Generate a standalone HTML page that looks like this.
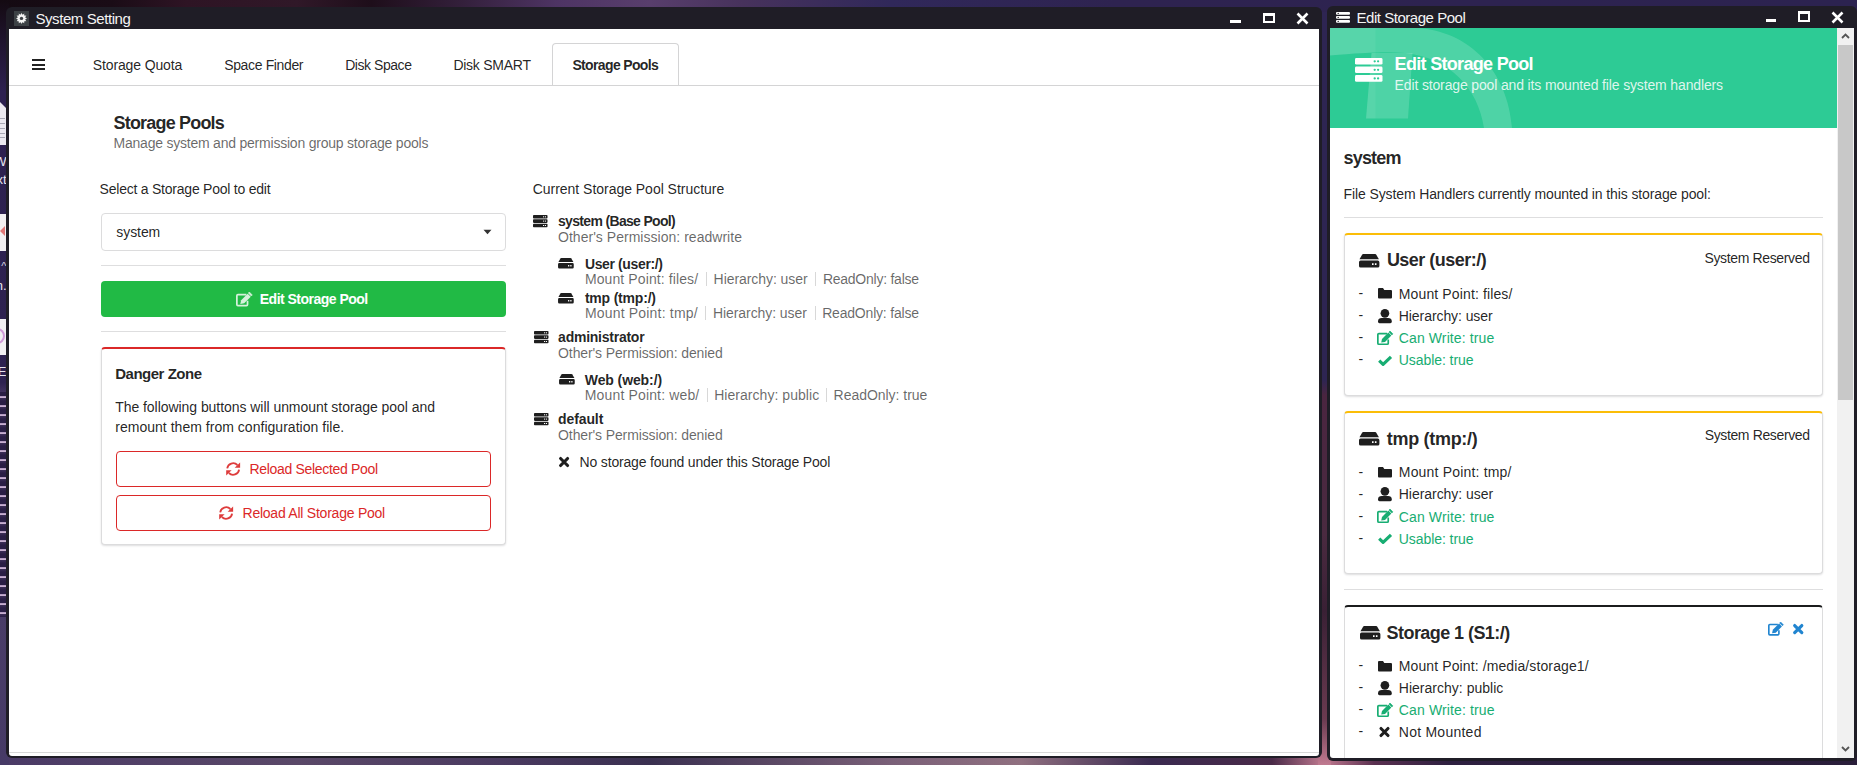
<!DOCTYPE html>
<html><head><meta charset="utf-8">
<style>
*{box-sizing:border-box}
html,body{margin:0;padding:0;width:1857px;height:765px;overflow:hidden;font-family:"Liberation Sans",sans-serif}
body{position:relative;background:#2a2040}
.a{position:absolute}
.t{position:absolute;white-space:pre}
.bg{left:0;top:0;width:1857px;height:765px;background:#2e2552}
.frame{background:#1f1d26;border-radius:6px}
.content{background:#fff}
.div{height:1px;background:#dededf}
.card{background:#fff;border:1px solid #dcdcdd;border-radius:4px;box-shadow:0 1px 2px 0 rgba(34,36,38,.15)}
svg{position:absolute;overflow:visible}
</style></head>
<body>
<div class="a bg"></div>
<div class="a" style="left:0;top:0;width:1857px;height:12px;background:linear-gradient(90deg,#140a12 0%,#1a0c16 6%,#2e1424 10%,#301828 16%,#1e0e1a 20%,#34203c 25%,#4e3464 30%,#583e6c 35%,#47325c 40%,#30285a 48%,#2e2350 60%,#2c2350 100%)"></div>
<div class="a" style="left:0;top:755px;width:1857px;height:10px;background:linear-gradient(90deg,#4a3a66 0%,#5a4868 16%,#4a3a60 27%,#3a3050 35%,#7a6078 48%,#907080 55%,#3a2a50 62%,#4a2a48 68.5%,#c07a90 71.3%,#5a3050 74%,#2e2040 78%,#2a1e3a 100%)"></div>
<div class="a" style="left:1318px;top:380px;width:13px;height:385px;background:linear-gradient(180deg,#2e2552 0%,#4a2540 4%,#4a2a40 40%,#3a2035 60%,#6a3a50 88%,#c07a90 100%)"></div>
<div class="a" style="left:0;top:0;width:9px;height:765px;background:linear-gradient(180deg,#140a12 0%,#2d2150 12%,#2e2250 50%,#5a4570 53%,#7a6080 62%,#6a5075 75%,#4a3d68 80%,#463a66 100%)"></div>
<div class="a" style="left:0;top:102px;width:6.5px;height:43px;background:#eceaf0"></div>
<div class="a" style="left:0;top:102px;width:0;height:0;border-top:6px solid #2d2150;border-left:6.5px solid transparent"></div>
<div class="a" style="left:0;top:118px;width:5px;height:1px;background:#a8a8b4"></div>
<div class="a" style="left:0;top:123px;width:5px;height:1px;background:#a8a8b4"></div>
<div class="a" style="left:0;top:128px;width:5px;height:1px;background:#a8a8b4"></div>
<div class="a" style="left:0;top:133px;width:5px;height:1px;background:#a8a8b4"></div>
<div class="a" style="left:0;top:137px;width:5px;height:1px;background:#a8a8b4"></div>
<div class="a" style="left:0;top:150px;width:6.5px;height:250px;overflow:hidden">
 <div class="t" style="right:0;top:5px;font-size:13px;line-height:13px;color:#e8e6ee">W</div>
 <div class="t" style="right:0;top:23px;font-size:13px;line-height:13px;color:#e8e6ee">xt</div>
 <div class="t" style="right:0;top:111px;font-size:11px;line-height:11px;color:#d8d6e0">^</div>
 <div class="t" style="right:0;top:129px;font-size:13px;line-height:13px;color:#e8e6ee">n.</div>
 <div class="t" style="right:0;top:215px;font-size:13px;line-height:13px;color:#e8e6ee">E</div>
 <div class="t" style="right:0;top:236px;font-size:13px;line-height:13px;color:#e8e6ee">..</div>
</div>
<div class="a" style="left:0;top:214px;width:6px;height:37px;background:#f2f0f2"></div>
<div class="a" style="left:0;top:226px;width:0;height:0;border-top:5px solid transparent;border-bottom:5px solid transparent;border-right:5px solid #e07878"></div>
<div class="a" style="left:0;top:319px;width:6px;height:36px;background:#f2f0f2"></div>
<div class="a" style="left:-4px;top:328px;width:9px;height:16px;border:2px solid #d09ad8;border-left:0;border-radius:0 8px 8px 0"></div>
<div class="a" style="left:0;top:392px;width:8px;height:225px;background:repeating-linear-gradient(180deg,#2a1e45 0px,#2a1e45 4px,#a890b8 4px,#c8b0d0 5.5px,#3a2c55 6.5px,#2a1e45 9px)"></div>
<!-- ===== Window 1 ===== -->
<div class="a frame" style="left:6px;top:7px;width:1316px;height:751px"></div>
<div class="a content" style="left:9px;top:29px;width:1310px;height:727px;border-radius:0 0 3px 3px"></div>
<div class="a" style="left:9px;top:752px;width:1310px;height:1px;background:#d8d8d8"></div>
<!-- gear icon box -->
<div class="a" style="left:14px;top:11px;width:15px;height:15px;background:#3c4145"></div>
<svg style="left:14px;top:11px" width="15" height="15" viewBox="0 0 15 15">
 <polygon points="7.50,1.80 8.43,3.92 10.30,2.55 10.05,4.85 12.35,4.60 10.98,6.47 13.10,7.40 10.98,8.33 12.35,10.20 10.05,9.95 10.30,12.25 8.43,10.88 7.50,13.00 6.57,10.88 4.70,12.25 4.95,9.95 2.65,10.20 4.02,8.33 1.90,7.40 4.02,6.47 2.65,4.60 4.95,4.85 4.70,2.55 6.57,3.92" fill="#f2f2f2"/>
 <circle cx="7.5" cy="7.4" r="3.9" fill="#f2f2f2"/>
 <circle cx="7.5" cy="7.4" r="1.7" fill="#3c4145"/>
</svg>
<!-- window controls win1 -->
<div class="a" style="left:1230px;top:20px;width:11px;height:3px;background:#fff"></div>
<div class="a" style="left:1263px;top:13px;width:12px;height:10px;border:2px solid #fff;border-top-width:3px"></div>
<svg style="left:1296px;top:12px" width="13" height="13" viewBox="0 0 13 13"><path d="M1.5 1.5L11.5 11.5M11.5 1.5L1.5 11.5" stroke="#fff" stroke-width="2.6"/></svg>

<!-- tabs -->
<div class="a" style="left:9px;top:85px;width:1310px;height:1px;background:#d4d4d5"></div>
<div class="a" style="left:552px;top:43px;width:127px;height:43px;border:1px solid #d4d4d5;border-bottom:0;border-radius:4px 4px 0 0;background:#fff"></div>
<div class="a" style="left:553px;top:85px;width:125px;height:1px;background:#d4d4d5"></div>
<div class="a" style="left:32px;top:59px;width:13px;height:2px;background:#222"></div>
<div class="a" style="left:32px;top:63.5px;width:13px;height:2px;background:#222"></div>
<div class="a" style="left:32px;top:68px;width:13px;height:2px;background:#222"></div>

<!-- dropdown -->
<div class="a" style="left:101px;top:213px;width:405px;height:38px;border:1px solid #dcdcdd;border-radius:4px"></div>
<svg style="left:483px;top:229px" width="9" height="6" viewBox="0 0 9 6"><path d="M0.5 0.8H8.5L4.5 5.2Z" fill="#333"/></svg>
<div class="a div" style="left:101px;top:265px;width:405px"></div>
<div class="a" style="left:101px;top:281px;width:405px;height:36px;background:#21ba45;border-radius:4px"></div>
<div class="a div" style="left:101px;top:331px;width:405px"></div>
<!-- danger zone -->
<div class="a card" style="left:101px;top:347px;width:405px;height:198px;border-top:2px solid #db2828"></div>
<div class="a" style="left:116px;top:451px;width:375px;height:36px;border:1px solid #db2828;border-radius:4px"></div>
<div class="a" style="left:116px;top:495px;width:375px;height:36px;border:1px solid #db2828;border-radius:4px"></div>

<!-- ===== Window 2 ===== -->
<div class="a frame" style="left:1327px;top:6px;width:530px;height:754.6px"></div>
<div class="a content" style="left:1330px;top:28px;width:524px;height:730px;border-radius:0 0 3px 3px;overflow:hidden">
</div>
<!-- green header -->
<div class="a" style="left:1330px;top:28px;width:507px;height:99.6px;background:#2dcb95;overflow:hidden">
 <svg style="left:0;top:0" width="507" height="100" viewBox="1330 28 507 100">
  <defs><clipPath id="cl"><rect x="1300" y="0" width="75.6" height="200"/></clipPath></defs>
  <path d="M1300 28H1415C1470 30 1508 72 1512 128H1484C1478 88 1450 58 1405 53C1380 51 1350 54 1300 58Z" fill="#fff" fill-opacity=".16"/>
  <path d="M1371.5 53H1412.5L1408 118.5H1366Z" fill="#fff" fill-opacity=".16"/>
  <g clip-path="url(#cl)" fill="#fff" fill-opacity=".05">
  <path d="M1300 28H1415C1470 30 1508 72 1512 128H1484C1478 88 1450 58 1405 53C1380 51 1350 54 1300 58Z"/>
  <path d="M1371.5 53H1412.5L1408 118.5H1366Z"/>
  </g>
 </svg>
</div>
<!-- scrollbar -->
<div class="a" style="left:1837px;top:28px;width:17px;height:730px;background:#f1f1f1"></div>
<div class="a" style="left:1838px;top:45px;width:15px;height:355px;background:#c8c8c8"></div>
<svg style="left:1841px;top:33px" width="9" height="6" viewBox="0 0 9 6"><path d="M1 5L4.5 1.5L8 5" stroke="#555" stroke-width="1.8" fill="none"/></svg>
<svg style="left:1841px;top:746px" width="9" height="6" viewBox="0 0 9 6"><path d="M1 1L4.5 4.5L8 1" stroke="#555" stroke-width="1.8" fill="none"/></svg>
<!-- win2 controls -->
<div class="a" style="left:1766px;top:19px;width:10px;height:3px;background:#fff"></div>
<div class="a" style="left:1798px;top:11px;width:12px;height:11px;border:2px solid #fff;border-top-width:3px"></div>
<svg style="left:1831px;top:10.5px" width="13" height="13" viewBox="0 0 13 13"><path d="M1.5 1.5L11.5 11.5M11.5 1.5L1.5 11.5" stroke="#fff" stroke-width="2.6"/></svg>
<!-- win2 title icon -->
<svg style="left:1336px;top:12px" width="14" height="11" viewBox="0 0 14 11">
 <rect x="0" y="0" width="14" height="2.8" rx="1" fill="#fff"/><rect x="0" y="4" width="14" height="2.8" rx="1" fill="#fff"/><rect x="0" y="8" width="14" height="2.8" rx="1" fill="#fff"/>
 <circle cx="2.2" cy="1.4" r=".7" fill="#1d1b21"/><circle cx="2.2" cy="5.4" r=".7" fill="#1d1b21"/><circle cx="2.2" cy="9.4" r=".7" fill="#1d1b21"/>
</svg>

<div class="a div" style="left:1344px;top:217px;width:479px"></div>
<div class="a card" style="left:1344px;top:233px;width:479px;height:163px;border-top:2px solid #fbbd08"></div>
<div class="a card" style="left:1344px;top:411px;width:479px;height:163px;border-top:2px solid #fbbd08"></div>
<div class="a div" style="left:1344px;top:589px;width:479px"></div>
<div class="a card" style="left:1344px;top:605px;width:479px;height:153px;border-top:2px solid #1b1c1d;border-bottom:0;border-radius:4px 4px 0 0;box-shadow:none"></div>
<!-- ICONS -->

<!-- tree server icons -->
<svg style="left:533px;top:214.7px" width="14.5" height="12.3" viewBox="0 0 14.5 12.3">
 <g fill="#1e1e1e"><rect x="0" y="0" width="14.5" height="3.6" rx=".8"/><rect x="0" y="4.3" width="14.5" height="3.6" rx=".8"/><rect x="0" y="8.7" width="14.5" height="3.6" rx=".8"/></g>
 <g fill="#fff"><rect x="10" y="1.3" width="1.1" height="1"/><rect x="11.9" y="1.3" width="1.1" height="1"/><rect x="10" y="5.6" width="1.1" height="1"/><rect x="11.9" y="5.6" width="1.1" height="1"/><rect x="10" y="10" width="1.1" height="1"/><rect x="11.9" y="10" width="1.1" height="1"/></g>
</svg>
<svg style="left:533.5px;top:330.7px" width="14.5" height="12.3" viewBox="0 0 14.5 12.3">
 <g fill="#1e1e1e"><rect x="0" y="0" width="14.5" height="3.6" rx=".8"/><rect x="0" y="4.3" width="14.5" height="3.6" rx=".8"/><rect x="0" y="8.7" width="14.5" height="3.6" rx=".8"/></g>
 <g fill="#fff"><rect x="10" y="1.3" width="1.1" height="1"/><rect x="11.9" y="1.3" width="1.1" height="1"/><rect x="10" y="5.6" width="1.1" height="1"/><rect x="11.9" y="5.6" width="1.1" height="1"/><rect x="10" y="10" width="1.1" height="1"/><rect x="11.9" y="10" width="1.1" height="1"/></g>
</svg>
<svg style="left:533.5px;top:412.6px" width="14.5" height="12.3" viewBox="0 0 14.5 12.3">
 <g fill="#1e1e1e"><rect x="0" y="0" width="14.5" height="3.6" rx=".8"/><rect x="0" y="4.3" width="14.5" height="3.6" rx=".8"/><rect x="0" y="8.7" width="14.5" height="3.6" rx=".8"/></g>
 <g fill="#fff"><rect x="10" y="1.3" width="1.1" height="1"/><rect x="11.9" y="1.3" width="1.1" height="1"/><rect x="10" y="5.6" width="1.1" height="1"/><rect x="11.9" y="5.6" width="1.1" height="1"/><rect x="10" y="10" width="1.1" height="1"/><rect x="11.9" y="10" width="1.1" height="1"/></g>
</svg>
<!-- header server icon -->
<svg style="left:1355.2px;top:58px" width="27.5" height="23.8" viewBox="0 0 27.5 23.8">
 <g fill="#fff"><rect x="0" y="0" width="27.5" height="6.6" rx="1.4"/><rect x="0" y="8.5" width="27.5" height="6.6" rx="1.4"/><rect x="0" y="17.1" width="27.5" height="6.7" rx="1.4"/></g>
 <g fill="#2dcb95"><circle cx="19.7" cy="3.3" r="1.15"/><circle cx="23.1" cy="3.3" r="1.15"/><circle cx="19.7" cy="11.8" r="1.15"/><circle cx="23.1" cy="11.8" r="1.15"/><circle cx="19.7" cy="20.4" r="1.15"/><circle cx="23.1" cy="20.4" r="1.15"/></g>
</svg>
<!-- tree hdd icons -->
<svg style="left:558.4px;top:258.4px;color:#1e1e1e;fill:#1e1e1e" width="15.8" height="10.4" viewBox="0 0 20.4 13.5"><path d="M4.2 0H16.2Q16.9 0 17.3 0.7L19.9 5.3H0.5L3.1 0.7Q3.5 0 4.2 0Z"/>
   <path d="M1.6 6.6H18.8Q20.4 6.6 20.4 8.2V11.9Q20.4 13.5 18.8 13.5H1.6Q0 13.5 0 11.9V8.2Q0 6.6 1.6 6.6ZM13 9.2V10.9H14.6V9.2ZM15.9 9.2V10.9H17.5V9.2Z" fill-rule="evenodd"/></svg>
<svg style="left:558.4px;top:293px;color:#1e1e1e;fill:#1e1e1e" width="15.8" height="10.4" viewBox="0 0 20.4 13.5"><path d="M4.2 0H16.2Q16.9 0 17.3 0.7L19.9 5.3H0.5L3.1 0.7Q3.5 0 4.2 0Z"/>
   <path d="M1.6 6.6H18.8Q20.4 6.6 20.4 8.2V11.9Q20.4 13.5 18.8 13.5H1.6Q0 13.5 0 11.9V8.2Q0 6.6 1.6 6.6ZM13 9.2V10.9H14.6V9.2ZM15.9 9.2V10.9H17.5V9.2Z" fill-rule="evenodd"/></svg>
<svg style="left:558.9px;top:373.8px;color:#1e1e1e;fill:#1e1e1e" width="15.8" height="10.4" viewBox="0 0 20.4 13.5"><path d="M4.2 0H16.2Q16.9 0 17.3 0.7L19.9 5.3H0.5L3.1 0.7Q3.5 0 4.2 0Z"/>
   <path d="M1.6 6.6H18.8Q20.4 6.6 20.4 8.2V11.9Q20.4 13.5 18.8 13.5H1.6Q0 13.5 0 11.9V8.2Q0 6.6 1.6 6.6ZM13 9.2V10.9H14.6V9.2ZM15.9 9.2V10.9H17.5V9.2Z" fill-rule="evenodd"/></svg>
<svg style="left:558.9px;top:456.9px;color:#1e1e1e;fill:#1e1e1e" width="10.2" height="10" viewBox="0 0 10 10"><path d="M1.5 1.5L8.5 8.5M8.5 1.5L1.5 8.5" fill="none" stroke="currentColor" stroke-width="3.1" stroke-linecap="round"/></svg>
<!-- tree separators -->
<div class="a" style="left:706px;top:272px;width:1px;height:14px;background:#d8d8d8"></div>
<div class="a" style="left:815px;top:272px;width:1px;height:14px;background:#d8d8d8"></div>
<div class="a" style="left:705px;top:306px;width:1px;height:14px;background:#d8d8d8"></div>
<div class="a" style="left:814.5px;top:306px;width:1px;height:14px;background:#d8d8d8"></div>
<div class="a" style="left:706.5px;top:388px;width:1px;height:14px;background:#d8d8d8"></div>
<div class="a" style="left:826px;top:388px;width:1px;height:14px;background:#d8d8d8"></div>
<!-- button icons -->
<svg style="left:235.6px;top:291.5px;color:#d6f1db;fill:#d6f1db" width="16.4" height="14.5" viewBox="0 0 16 14.1"><path d="M10.2 2.55H1.9Q0.85 2.55 0.85 3.6V12.2Q0.85 13.25 1.9 13.25H10.2Q11.25 13.25 11.25 12.2V8.5" fill="none" stroke="currentColor" stroke-width="1.7"/>
   <path d="M4.2 11.6L5 8L11.4 1.6L14.4 4.6L8 11Z"/>
   <path d="M12 1L13 0L15.9 2.9L14.9 3.9Z" stroke="currentColor" stroke-width=".6" stroke-linejoin="round"/></svg>
<svg style="left:226px;top:461.9px;color:#db2828;fill:#db2828;opacity:.9" width="14.3" height="14" viewBox="0 0 14.3 14"><path d="M1.2 6.4A6 6 0 0 1 11.4 3" fill="none" stroke="currentColor" stroke-width="1.8"/>
   <path d="M14.1 0.4V5.8H8.7Z"/>
   <path d="M13.1 7.6A6 6 0 0 1 2.9 11" fill="none" stroke="currentColor" stroke-width="1.8"/>
   <path d="M0.2 13.6V8.2H5.6Z"/></svg>
<svg style="left:219px;top:505.9px;color:#db2828;fill:#db2828;opacity:.9" width="14.3" height="14" viewBox="0 0 14.3 14"><path d="M1.2 6.4A6 6 0 0 1 11.4 3" fill="none" stroke="currentColor" stroke-width="1.8"/>
   <path d="M14.1 0.4V5.8H8.7Z"/>
   <path d="M13.1 7.6A6 6 0 0 1 2.9 11" fill="none" stroke="currentColor" stroke-width="1.8"/>
   <path d="M0.2 13.6V8.2H5.6Z"/></svg>
<!-- card hdd icons -->
<svg style="left:1359.4px;top:253.6px;fill:#1e1e1e" width="20.4" height="13.5" viewBox="0 0 20.4 13.5"><path d="M4.2 0H16.2Q16.9 0 17.3 0.7L19.9 5.3H0.5L3.1 0.7Q3.5 0 4.2 0Z"/>
   <path d="M1.6 6.6H18.8Q20.4 6.6 20.4 8.2V11.9Q20.4 13.5 18.8 13.5H1.6Q0 13.5 0 11.9V8.2Q0 6.6 1.6 6.6ZM13 9.2V10.9H14.6V9.2ZM15.9 9.2V10.9H17.5V9.2Z" fill-rule="evenodd"/></svg>
<svg style="left:1359px;top:431.7px;fill:#1e1e1e" width="20.4" height="13.5" viewBox="0 0 20.4 13.5"><path d="M4.2 0H16.2Q16.9 0 17.3 0.7L19.9 5.3H0.5L3.1 0.7Q3.5 0 4.2 0Z"/>
   <path d="M1.6 6.6H18.8Q20.4 6.6 20.4 8.2V11.9Q20.4 13.5 18.8 13.5H1.6Q0 13.5 0 11.9V8.2Q0 6.6 1.6 6.6ZM13 9.2V10.9H14.6V9.2ZM15.9 9.2V10.9H17.5V9.2Z" fill-rule="evenodd"/></svg>
<svg style="left:1359.6px;top:625.7px;fill:#1e1e1e" width="20.4" height="13.5" viewBox="0 0 20.4 13.5"><path d="M4.2 0H16.2Q16.9 0 17.3 0.7L19.9 5.3H0.5L3.1 0.7Q3.5 0 4.2 0Z"/>
   <path d="M1.6 6.6H18.8Q20.4 6.6 20.4 8.2V11.9Q20.4 13.5 18.8 13.5H1.6Q0 13.5 0 11.9V8.2Q0 6.6 1.6 6.6ZM13 9.2V10.9H14.6V9.2ZM15.9 9.2V10.9H17.5V9.2Z" fill-rule="evenodd"/></svg>
<!-- card 3 blue icons -->
<svg style="left:1767.7px;top:622.4px;color:#2185d0;fill:#2185d0" width="15.5" height="13.7" viewBox="0 0 16 14.1"><path d="M10.2 2.55H1.9Q0.85 2.55 0.85 3.6V12.2Q0.85 13.25 1.9 13.25H10.2Q11.25 13.25 11.25 12.2V8.5" fill="none" stroke="currentColor" stroke-width="1.7"/>
   <path d="M4.2 11.6L5 8L11.4 1.6L14.4 4.6L8 11Z"/>
   <path d="M12 1L13 0L15.9 2.9L14.9 3.9Z" stroke="currentColor" stroke-width=".6" stroke-linejoin="round"/></svg>
<svg style="left:1793px;top:623.7px;color:#2185d0;fill:#2185d0" width="10.5" height="10.2" viewBox="0 0 10 10"><path d="M1.5 1.5L8.5 8.5M8.5 1.5L1.5 8.5" fill="none" stroke="currentColor" stroke-width="3.1" stroke-linecap="round"/></svg>

<svg style="left:1377.9px;top:288.3px;fill:#1e1e1e" width="14" height="10.6" viewBox="0 0 14 10.6"><path d="M0 1Q0 0 1 0H5L6.3 2H13Q14 2 14 3V9.6Q14 10.6 13 10.6H1Q0 10.6 0 9.6Z"/></svg>
<svg style="left:1378px;top:308.8px;fill:#1e1e1e" width="13.8" height="14.3" viewBox="0 0 14 14.5"><circle cx="7" cy="4.4" r="4.4"/>
   <path d="M0 12.5C0 10.3 1.6 9.2 3.8 9.2H10.2C12.4 9.2 14 10.3 14 12.5V13Q14 14.5 12.5 14.5H1.5Q0 14.5 0 13Z"/></svg>
<svg style="left:1377px;top:330.7px;color:#17ad72;fill:#17ad72" width="16" height="14.1" viewBox="0 0 16 14.1"><path d="M10.2 2.55H1.9Q0.85 2.55 0.85 3.6V12.2Q0.85 13.25 1.9 13.25H10.2Q11.25 13.25 11.25 12.2V8.5" fill="none" stroke="currentColor" stroke-width="1.7"/>
   <path d="M4.2 11.6L5 8L11.4 1.6L14.4 4.6L8 11Z"/>
   <path d="M12 1L13 0L15.9 2.9L14.9 3.9Z" stroke="currentColor" stroke-width=".6" stroke-linejoin="round"/></svg>
<svg style="left:1378px;top:355.6px;color:#17ad72;fill:#17ad72" width="14.2" height="10.4" viewBox="0 0 14 10.4"><path d="M1.1 4.6L5 8.3L12.9 0.9" fill="none" stroke="currentColor" stroke-width="3.2" stroke-linejoin="round"/></svg>
<svg style="left:1377.9px;top:466.9px;fill:#1e1e1e" width="14" height="10.6" viewBox="0 0 14 10.6"><path d="M0 1Q0 0 1 0H5L6.3 2H13Q14 2 14 3V9.6Q14 10.6 13 10.6H1Q0 10.6 0 9.6Z"/></svg>
<svg style="left:1378px;top:487.4px;fill:#1e1e1e" width="13.8" height="14.3" viewBox="0 0 14 14.5"><circle cx="7" cy="4.4" r="4.4"/>
   <path d="M0 12.5C0 10.3 1.6 9.2 3.8 9.2H10.2C12.4 9.2 14 10.3 14 12.5V13Q14 14.5 12.5 14.5H1.5Q0 14.5 0 13Z"/></svg>
<svg style="left:1377px;top:509.3px;color:#17ad72;fill:#17ad72" width="16" height="14.1" viewBox="0 0 16 14.1"><path d="M10.2 2.55H1.9Q0.85 2.55 0.85 3.6V12.2Q0.85 13.25 1.9 13.25H10.2Q11.25 13.25 11.25 12.2V8.5" fill="none" stroke="currentColor" stroke-width="1.7"/>
   <path d="M4.2 11.6L5 8L11.4 1.6L14.4 4.6L8 11Z"/>
   <path d="M12 1L13 0L15.9 2.9L14.9 3.9Z" stroke="currentColor" stroke-width=".6" stroke-linejoin="round"/></svg>
<svg style="left:1378px;top:534.2px;color:#17ad72;fill:#17ad72" width="14.2" height="10.4" viewBox="0 0 14 10.4"><path d="M1.1 4.6L5 8.3L12.9 0.9" fill="none" stroke="currentColor" stroke-width="3.2" stroke-linejoin="round"/></svg>
<svg style="left:1377.9px;top:660.5px;fill:#1e1e1e" width="14" height="10.6" viewBox="0 0 14 10.6"><path d="M0 1Q0 0 1 0H5L6.3 2H13Q14 2 14 3V9.6Q14 10.6 13 10.6H1Q0 10.6 0 9.6Z"/></svg>
<svg style="left:1378px;top:681.0px;fill:#1e1e1e" width="13.8" height="14.3" viewBox="0 0 14 14.5"><circle cx="7" cy="4.4" r="4.4"/>
   <path d="M0 12.5C0 10.3 1.6 9.2 3.8 9.2H10.2C12.4 9.2 14 10.3 14 12.5V13Q14 14.5 12.5 14.5H1.5Q0 14.5 0 13Z"/></svg>
<svg style="left:1377px;top:702.9px;color:#17ad72;fill:#17ad72" width="16" height="14.1" viewBox="0 0 16 14.1"><path d="M10.2 2.55H1.9Q0.85 2.55 0.85 3.6V12.2Q0.85 13.25 1.9 13.25H10.2Q11.25 13.25 11.25 12.2V8.5" fill="none" stroke="currentColor" stroke-width="1.7"/>
   <path d="M4.2 11.6L5 8L11.4 1.6L14.4 4.6L8 11Z"/>
   <path d="M12 1L13 0L15.9 2.9L14.9 3.9Z" stroke="currentColor" stroke-width=".6" stroke-linejoin="round"/></svg>
<svg style="left:1379.3px;top:726.9px;color:#1e1e1e;fill:#1e1e1e" width="11" height="10" viewBox="0 0 10 10"><path d="M1.5 1.5L8.5 8.5M8.5 1.5L1.5 8.5" fill="none" stroke="currentColor" stroke-width="3.1" stroke-linecap="round"/></svg>

<div class="t" style="left:35.4px;top:11.4px;font-size:15px;line-height:15px;font-weight:400;color:#f4f4f4;letter-spacing:-0.414px">System Setting</div>
<div class="t" style="left:92.8px;top:57.6px;font-size:14px;line-height:14px;font-weight:400;color:rgba(0,0,0,.87);letter-spacing:-0.128px">Storage Quota</div>
<div class="t" style="left:224.2px;top:57.6px;font-size:14px;line-height:14px;font-weight:400;color:rgba(0,0,0,.87);letter-spacing:-0.357px">Space Finder</div>
<div class="t" style="left:345.2px;top:57.6px;font-size:14px;line-height:14px;font-weight:400;color:rgba(0,0,0,.87);letter-spacing:-0.451px">Disk Space</div>
<div class="t" style="left:453.4px;top:57.6px;font-size:14px;line-height:14px;font-weight:400;color:rgba(0,0,0,.87);letter-spacing:-0.256px">Disk SMART</div>
<div class="t" style="left:572.4px;top:57.6px;font-size:14px;line-height:14px;font-weight:700;color:rgba(0,0,0,.87);letter-spacing:-0.642px">Storage Pools</div>
<div class="t" style="left:113.5px;top:114.4px;font-size:18px;line-height:18px;font-weight:700;color:rgba(0,0,0,.87);letter-spacing:-0.810px">Storage Pools</div>
<div class="t" style="left:113.5px;top:136.3px;font-size:14px;line-height:14px;font-weight:400;color:rgba(0,0,0,.6);letter-spacing:-0.221px">Manage system and permission group storage pools</div>
<div class="t" style="left:99.6px;top:182.3px;font-size:14px;line-height:14px;font-weight:400;color:rgba(0,0,0,.87);letter-spacing:-0.229px">Select a Storage Pool to edit</div>
<div class="t" style="left:116.3px;top:225.1px;font-size:14px;line-height:14px;font-weight:400;color:rgba(0,0,0,.87);letter-spacing:-0.074px">system</div>
<div class="t" style="left:259.8px;top:292.2px;font-size:14px;line-height:14px;font-weight:700;color:#ffffff;letter-spacing:-0.517px">Edit Storage Pool</div>
<div class="t" style="left:115.2px;top:366.1px;font-size:15px;line-height:15px;font-weight:700;color:rgba(0,0,0,.87);letter-spacing:-0.481px">Danger Zone</div>
<div class="t" style="left:115.2px;top:400.3px;font-size:14px;line-height:14px;font-weight:400;color:rgba(0,0,0,.87);letter-spacing:-0.049px">The following buttons will unmount storage pool and</div>
<div class="t" style="left:115.2px;top:420.1px;font-size:14px;line-height:14px;font-weight:400;color:rgba(0,0,0,.87);letter-spacing:0.027px">remount them from configuration file.</div>
<div class="t" style="left:249.4px;top:462.4px;font-size:14px;line-height:14px;font-weight:400;color:#db2828;letter-spacing:-0.313px">Reload Selected Pool</div>
<div class="t" style="left:242.5px;top:506.4px;font-size:14px;line-height:14px;font-weight:400;color:#db2828;letter-spacing:-0.234px">Reload All Storage Pool</div>
<div class="t" style="left:532.7px;top:182.1px;font-size:14px;line-height:14px;font-weight:400;color:rgba(0,0,0,.87);letter-spacing:-0.024px">Current Storage Pool Structure</div>
<div class="t" style="left:558.0px;top:214.0px;font-size:14px;line-height:14px;font-weight:700;color:rgba(0,0,0,.87);letter-spacing:-0.671px">system (Base Pool)</div>
<div class="t" style="left:558.0px;top:229.7px;font-size:14px;line-height:14px;font-weight:400;color:rgba(0,0,0,.6);letter-spacing:0.028px">Other's Permission: readwrite</div>
<div class="t" style="left:584.9px;top:257.4px;font-size:14px;line-height:14px;font-weight:700;color:rgba(0,0,0,.87);letter-spacing:-0.367px">User (user:/)</div>
<div class="t" style="left:584.9px;top:271.7px;font-size:14px;line-height:14px;font-weight:400;color:rgba(0,0,0,.6);letter-spacing:0.106px">Mount Point: files/</div>
<div class="t" style="left:713.6px;top:271.7px;font-size:14px;line-height:14px;font-weight:400;color:rgba(0,0,0,.6);letter-spacing:-0.068px">Hierarchy: user</div>
<div class="t" style="left:822.9px;top:271.7px;font-size:14px;line-height:14px;font-weight:400;color:rgba(0,0,0,.6);letter-spacing:-0.247px">ReadOnly: false</div>
<div class="t" style="left:584.9px;top:290.6px;font-size:14px;line-height:14px;font-weight:700;color:rgba(0,0,0,.87);letter-spacing:-0.199px">tmp (tmp:/)</div>
<div class="t" style="left:584.9px;top:305.7px;font-size:14px;line-height:14px;font-weight:400;color:rgba(0,0,0,.6);letter-spacing:0.187px">Mount Point: tmp/</div>
<div class="t" style="left:713.0px;top:305.7px;font-size:14px;line-height:14px;font-weight:400;color:rgba(0,0,0,.6);letter-spacing:-0.075px">Hierarchy: user</div>
<div class="t" style="left:822.2px;top:305.7px;font-size:14px;line-height:14px;font-weight:400;color:rgba(0,0,0,.6);letter-spacing:-0.201px">ReadOnly: false</div>
<div class="t" style="left:558.1px;top:330.1px;font-size:14px;line-height:14px;font-weight:700;color:rgba(0,0,0,.87);letter-spacing:-0.244px">administrator</div>
<div class="t" style="left:558.1px;top:346.3px;font-size:14px;line-height:14px;font-weight:400;color:rgba(0,0,0,.6);letter-spacing:-0.121px">Other's Permission: denied</div>
<div class="t" style="left:584.8px;top:373.1px;font-size:14px;line-height:14px;font-weight:700;color:rgba(0,0,0,.87);letter-spacing:-0.100px">Web (web:/)</div>
<div class="t" style="left:584.8px;top:387.7px;font-size:14px;line-height:14px;font-weight:400;color:rgba(0,0,0,.6);letter-spacing:0.149px">Mount Point: web/</div>
<div class="t" style="left:714.2px;top:387.7px;font-size:14px;line-height:14px;font-weight:400;color:rgba(0,0,0,.6);letter-spacing:0.043px">Hierarchy: public</div>
<div class="t" style="left:833.6px;top:387.7px;font-size:14px;line-height:14px;font-weight:400;color:rgba(0,0,0,.6);letter-spacing:-0.034px">ReadOnly: true</div>
<div class="t" style="left:558.1px;top:411.9px;font-size:14px;line-height:14px;font-weight:700;color:rgba(0,0,0,.87);letter-spacing:-0.113px">default</div>
<div class="t" style="left:558.1px;top:428.0px;font-size:14px;line-height:14px;font-weight:400;color:rgba(0,0,0,.6);letter-spacing:-0.121px">Other's Permission: denied</div>
<div class="t" style="left:579.6px;top:454.9px;font-size:14px;line-height:14px;font-weight:400;color:rgba(0,0,0,.87);letter-spacing:-0.178px">No storage found under this Storage Pool</div>
<div class="t" style="left:1356.6px;top:9.9px;font-size:15px;line-height:15px;font-weight:400;color:#f4f4f4;letter-spacing:-0.474px">Edit Storage Pool</div>
<div class="t" style="left:1394.6px;top:54.6px;font-size:18px;line-height:18px;font-weight:700;color:#ffffff;letter-spacing:-0.689px">Edit Storage Pool</div>
<div class="t" style="left:1394.6px;top:77.6px;font-size:14px;line-height:14px;font-weight:400;color:rgba(255,255,255,.85);letter-spacing:-0.146px">Edit storage pool and its mounted file system handlers</div>
<div class="t" style="left:1343.6px;top:148.5px;font-size:18px;line-height:18px;font-weight:700;color:rgba(0,0,0,.87);letter-spacing:-0.841px">system</div>
<div class="t" style="left:1343.6px;top:186.5px;font-size:14px;line-height:14px;font-weight:400;color:rgba(0,0,0,.87);letter-spacing:-0.118px">File System Handlers currently mounted in this storage pool:</div>
<div class="t" style="left:1386.9px;top:251.1px;font-size:18px;line-height:18px;font-weight:700;color:rgba(0,0,0,.87);letter-spacing:-0.518px">User (user:/)</div>
<div class="t" style="left:1704.4px;top:250.6px;font-size:14px;line-height:14px;font-weight:400;color:rgba(0,0,0,.87);letter-spacing:-0.352px">System Reserved</div>
<div class="t" style="left:1386.8px;top:429.8px;font-size:18px;line-height:18px;font-weight:700;color:rgba(0,0,0,.87);letter-spacing:-0.308px">tmp (tmp:/)</div>
<div class="t" style="left:1704.7px;top:427.7px;font-size:14px;line-height:14px;font-weight:400;color:rgba(0,0,0,.87);letter-spacing:-0.366px">System Reserved</div>
<div class="t" style="left:1386.6px;top:623.8px;font-size:18px;line-height:18px;font-weight:700;color:rgba(0,0,0,.87);letter-spacing:-0.564px">Storage 1 (S1:/)</div>
<div class="t" style="left:1398.8px;top:286.7px;font-size:14px;line-height:14px;font-weight:400;color:rgba(0,0,0,.87);letter-spacing:0.127px">Mount Point: files/</div>
<div class="t" style="left:1358.5px;top:285.9px;font-size:14px;line-height:14px;font-weight:400;color:rgba(0,0,0,.87);letter-spacing:0.000px">-</div>
<div class="t" style="left:1398.8px;top:308.8px;font-size:14px;line-height:14px;font-weight:400;color:rgba(0,0,0,.87);letter-spacing:-0.075px">Hierarchy: user</div>
<div class="t" style="left:1358.5px;top:308.0px;font-size:14px;line-height:14px;font-weight:400;color:rgba(0,0,0,.87);letter-spacing:0.000px">-</div>
<div class="t" style="left:1398.8px;top:330.9px;font-size:14px;line-height:14px;font-weight:400;color:#17ad72;letter-spacing:0.107px">Can Write: true</div>
<div class="t" style="left:1358.5px;top:330.1px;font-size:14px;line-height:14px;font-weight:400;color:rgba(0,0,0,.87);letter-spacing:0.000px">-</div>
<div class="t" style="left:1398.8px;top:353.0px;font-size:14px;line-height:14px;font-weight:400;color:#17ad72;letter-spacing:-0.074px">Usable: true</div>
<div class="t" style="left:1358.5px;top:352.2px;font-size:14px;line-height:14px;font-weight:400;color:rgba(0,0,0,.87);letter-spacing:0.000px">-</div>
<div class="t" style="left:1398.8px;top:465.3px;font-size:14px;line-height:14px;font-weight:400;color:rgba(0,0,0,.87);letter-spacing:0.181px">Mount Point: tmp/</div>
<div class="t" style="left:1358.5px;top:464.5px;font-size:14px;line-height:14px;font-weight:400;color:rgba(0,0,0,.87);letter-spacing:0.000px">-</div>
<div class="t" style="left:1398.8px;top:487.4px;font-size:14px;line-height:14px;font-weight:400;color:rgba(0,0,0,.87);letter-spacing:-0.048px">Hierarchy: user</div>
<div class="t" style="left:1358.5px;top:486.6px;font-size:14px;line-height:14px;font-weight:400;color:rgba(0,0,0,.87);letter-spacing:0.000px">-</div>
<div class="t" style="left:1398.8px;top:509.5px;font-size:14px;line-height:14px;font-weight:400;color:#17ad72;letter-spacing:0.121px">Can Write: true</div>
<div class="t" style="left:1358.5px;top:508.7px;font-size:14px;line-height:14px;font-weight:400;color:rgba(0,0,0,.87);letter-spacing:0.000px">-</div>
<div class="t" style="left:1398.8px;top:531.6px;font-size:14px;line-height:14px;font-weight:400;color:#17ad72;letter-spacing:-0.074px">Usable: true</div>
<div class="t" style="left:1358.5px;top:530.8px;font-size:14px;line-height:14px;font-weight:400;color:rgba(0,0,0,.87);letter-spacing:0.000px">-</div>
<div class="t" style="left:1398.8px;top:658.9px;font-size:14px;line-height:14px;font-weight:400;color:rgba(0,0,0,.87);letter-spacing:0.108px">Mount Point: /media/storage1/</div>
<div class="t" style="left:1358.5px;top:658.1px;font-size:14px;line-height:14px;font-weight:400;color:rgba(0,0,0,.87);letter-spacing:0.000px">-</div>
<div class="t" style="left:1398.8px;top:681.0px;font-size:14px;line-height:14px;font-weight:400;color:rgba(0,0,0,.87);letter-spacing:0.014px">Hierarchy: public</div>
<div class="t" style="left:1358.5px;top:680.2px;font-size:14px;line-height:14px;font-weight:400;color:rgba(0,0,0,.87);letter-spacing:0.000px">-</div>
<div class="t" style="left:1398.8px;top:703.1px;font-size:14px;line-height:14px;font-weight:400;color:#17ad72;letter-spacing:0.134px">Can Write: true</div>
<div class="t" style="left:1358.5px;top:702.3px;font-size:14px;line-height:14px;font-weight:400;color:rgba(0,0,0,.87);letter-spacing:0.000px">-</div>
<div class="t" style="left:1398.8px;top:725.2px;font-size:14px;line-height:14px;font-weight:400;color:rgba(0,0,0,.87);letter-spacing:0.248px">Not Mounted</div>
<div class="t" style="left:1358.5px;top:724.4px;font-size:14px;line-height:14px;font-weight:400;color:rgba(0,0,0,.87);letter-spacing:0.000px">-</div>
</body></html>
